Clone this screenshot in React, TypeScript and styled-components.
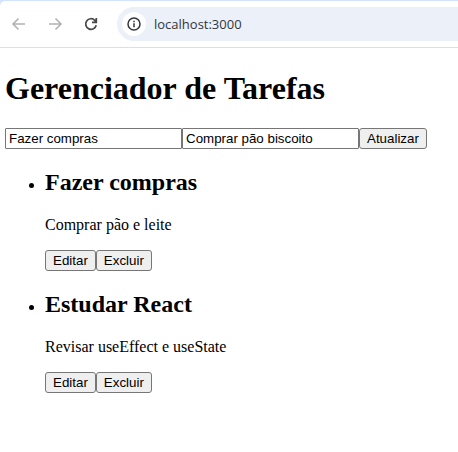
import React, { useState } from "react";
import styled, { createGlobalStyle } from "styled-components";

const GlobalStyle = createGlobalStyle`
  body {
    margin: 0;
    background: #fff;
    color: #000;
    font-family: "Liberation Serif", "Times New Roman", serif;
    font-size: 16px;
  }
`;

const BrowserFrame = styled.header`
  padding-top: 1px;
  background: #d3e3fd;
`;

const Toolbar = styled.div`
  display: flex;
  align-items: center;
  height: 46px;
  padding-left: 10px;
  border-bottom: 1px solid #dedfe1;
  border-top-left-radius: 5px;
  background: #fff;
`;

const NavButton = styled.button`
  display: flex;
  width: 18px;
  height: 18px;
  margin-right: 18px;
  padding: 0;
  border: 0;
  background: none;
  color: ${(p) => (p.disabled ? "#b3b3b3" : "#474747")};
`;

const AddressBar = styled.div`
  display: flex;
  flex: 1;
  align-items: center;
  gap: 8px;
  height: 34px;
  padding-left: 5px;
  margin-left: -1px;
  border-radius: 17px 0 0 17px;
  background: #ebf0f9;
`;

const SiteInfo = styled.button`
  display: flex;
  align-items: center;
  justify-content: center;
  width: 24px;
  height: 24px;
  padding: 0;
  border: 0;
  border-radius: 50%;
  background: #fff;
  color: #333639;
`;

const Url = styled.input`
  flex: 1;
  min-width: 0;
  padding: 0;
  border: 0;
  outline: 0;
  background: none;
  color: #333639;
  font: 13px "Open Sans", "Noto Sans", sans-serif;
`;

const Page = styled.main`
  padding: 0 5px;
`;

const Title = styled.h1`
  margin: 22px 0 21px;
  font-size: 32px;
  line-height: 37px;
`;

const Form = styled.form`
  display: flex;
`;

const Field = styled.input`
  box-sizing: border-box;
  width: 177px;
  height: 21px;
  padding: 1px 3px;
  border: 1px solid #767676;
  border-radius: 1px;
  background: #fff;
  color: #000;
  font-family: "Liberation Sans", Arial, sans-serif;
`;

const Button = styled.button`
  height: 21px;
  padding: 0 7px;
  border: 1px solid #767676;
  border-radius: 3px;
  background: #efefef;
  color: #000;
  font-family: "Liberation Sans", Arial, sans-serif;
  line-height: 19px;
`;

const TaskList = styled.ul`
  margin: 20px 0;
  padding-left: 40px;
`;

const Task = styled.li`
  margin-bottom: 20px;
`;

const TaskTitle = styled.h2`
  margin: 0 0 20px;
  font-size: 24px;
  line-height: 27px;
`;

const Description = styled.p`
  margin: 0 0 16px;
  line-height: 18px;
`;

const Actions = styled.div`
  display: flex;
`;

const tasks = [
  { title: "Fazer compras", description: "Comprar pão e leite" },
  { title: "Estudar React", description: "Revisar useEffect e useState" },
];

const Arrow = ({ forward = false }: { forward?: boolean }) => (
  <svg width="18" height="18" viewBox="0 0 18 18" fill="none" stroke="currentColor" strokeWidth="1.6">
    <path d={forward ? "M3 9h12M9.500 3.500 15 9l-5.500 5.500" : "M15 9H3M8.500 3.500 3 9l5.500 5.500"} />
  </svg>
);

export default function App() {
  const [title, setTitle] = useState("Fazer compras");
  const [description, setDescription] = useState("Comprar pão biscoito");

  return (
    <>
      <GlobalStyle />
      <BrowserFrame>
        <Toolbar>
          <NavButton aria-label="Voltar" disabled><Arrow /></NavButton>
          <NavButton aria-label="Avançar" disabled><Arrow forward /></NavButton>
          <NavButton aria-label="Recarregar">
            <svg width="18" height="18" viewBox="0 0 18 18" fill="none" stroke="currentColor" strokeWidth="1.7">
              <path d="M14.200 10.200A5.300 5.300 0 1 1 12.800 5.300L14.200 6.700M14.300 3v4.300H10" />
            </svg>
          </NavButton>
          <AddressBar>
            <SiteInfo aria-label="Informações do site">
              <svg width="16" height="16" viewBox="0 0 16 16" fill="none" stroke="currentColor" strokeWidth="1.5">
                <circle cx="8" cy="8" r="6" />
                <path d="M8 7.300v4M8 4.700v1.500" />
              </svg>
            </SiteInfo>
            <Url aria-label="Endereço" defaultValue="localhost:3000" />
          </AddressBar>
        </Toolbar>
      </BrowserFrame>
      <Page>
        <Title>Gerenciador de Tarefas</Title>
        <Form onSubmit={(e) => e.preventDefault()}>
          <Field aria-label="Título" value={title} onChange={(e) => setTitle(e.target.value)} />
          <Field aria-label="Descrição" value={description} onChange={(e) => setDescription(e.target.value)} />
          <Button type="submit">Atualizar</Button>
        </Form>
        <TaskList>
          {tasks.map((task) => (
            <Task key={task.title}>
              <TaskTitle>{task.title}</TaskTitle>
              <Description>{task.description}</Description>
              <Actions>
                <Button type="button">Editar</Button>
                <Button type="button">Excluir</Button>
              </Actions>
            </Task>
          ))}
        </TaskList>
      </Page>
    </>
  );
}
